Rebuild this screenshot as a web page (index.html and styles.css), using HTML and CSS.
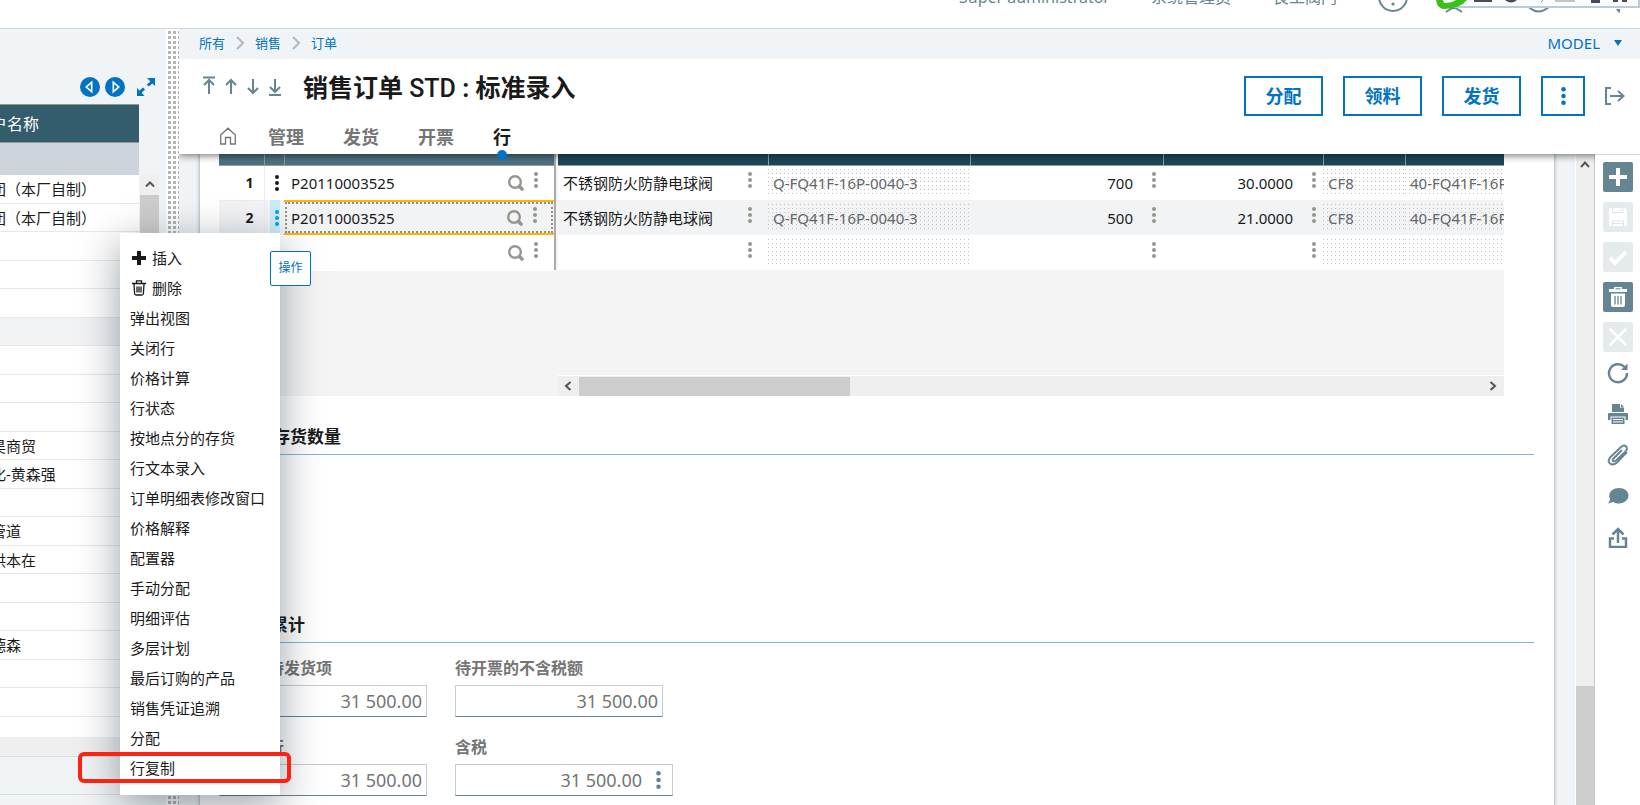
FILE: index.html
```
<!DOCTYPE html>
<html lang="zh-CN">
<head>
<meta charset="utf-8">
<title>销售订单 STD : 标准录入</title>
<link rel="stylesheet" href="styles.css">
</head>
<body>
<svg class="sprite" aria-hidden="true">
  <symbol id="dots" viewBox="0 0 4 16"><circle cx="2" cy="2" r="2"/><circle cx="2" cy="8" r="2"/><circle cx="2" cy="14" r="2"/></symbol>
  <symbol id="search" viewBox="0 0 16 16"><circle cx="7" cy="7" r="5.800" fill="none" stroke="currentColor" stroke-width="2.400"/><path d="M11.500 11.500l2.500 2.500" stroke="currentColor" stroke-width="3.600" stroke-linecap="round"/></symbol>
  <symbol id="chevron" viewBox="0 0 8 14"><path d="M1 1l6 6-6 6" fill="none" stroke="currentColor" stroke-width="2"/></symbol>
</svg>

<header class="topbar">
  <div class="topbar-inner">
    <a class="top-link user" href="#">Super administrator</a>
    <a class="top-link role" href="#">系统管理员</a>
    <a class="top-link company" href="#">良工阀门</a>
    <svg class="help" viewBox="0 0 30 30"><circle cx="15" cy="15" r="14" fill="none" stroke="#668592" stroke-width="2"/><circle cx="15" cy="22" r="1.6" fill="#668592"/></svg>
    <svg class="top-icons" viewBox="0 0 176 12"><path d="M2 11l8-5 8 5M84 5q10 11 22 0" fill="none" stroke="#668592" stroke-width="2"/><path d="M172 8h6l-3 4z" fill="#668592"/></svg>
  </div>
  <div class="ime-bar">
    <svg viewBox="0 0 204 10"><rect x="8" y="-2" width="195" height="9" fill="#fbfcfe" stroke="#bccadb" stroke-width="2"/><path d="M0 0h31Q24 9 7 9Q1 8 0 0z" fill="#3bc11e"/><path d="M7 0h13q-4 3-12 3z" fill="#fff"/><path d="M38 0h18v2H38zM69 0h12q-6 5-12 0zM155 0h9v3h-9zM177 0h5v2h-5zM186 0h5v2h-5z" fill="#4a4a60"/><path d="M105 2l3-3M119 1h20" stroke="#8a8aa0"/></svg>
  </div>
</header>

<div class="workspace">
  <aside class="side">
    <div class="side-tools">
      <button class="icon-btn" aria-label="上一个"><svg width="20" height="20" viewBox="0 0 20 20"><circle cx="10" cy="10" r="10" fill="#0073c2"/><path d="M12.500 3.500v13L5 10z" fill="#fff"/><path d="M10.800 7v6L7.500 10z" fill="#0073c2"/></svg></button>
      <button class="icon-btn" aria-label="下一个"><svg width="20" height="20" viewBox="0 0 20 20"><circle cx="10" cy="10" r="10" fill="#0073c2"/><path d="M7.500 3.500v13L15 10z" fill="#fff"/><path d="M9.200 7v6L12.500 10z" fill="#0073c2"/></svg></button>
      <button class="icon-btn expand" aria-label="展开"><svg width="20" height="20" viewBox="0 0 20 20"><path d="M11 1h8v8l-2.600-2.600-3.600 3-2-2 3.600-3zM1 11l2.500 2.500 3.500-3 2 2-3.300 3.300L8.500 19H1z" fill="#0073c2"/></svg></button>
    </div>
    <div class="customers">
      <div class="customers-view">
        <table class="customers-table">
          <thead><tr><th>户名称</th></tr><tr class="filter"><td></td></tr></thead>
          <tbody>
            <tr><td>团（本厂自制）</td></tr><tr><td>团（本厂自制）</td></tr><tr><td></td></tr><tr><td></td></tr>
            <tr><td></td></tr><tr class="selected"><td></td></tr><tr><td></td></tr><tr><td></td></tr>
            <tr><td></td></tr><tr><td>昊商贸</td></tr><tr><td>化-黄森强</td></tr><tr><td></td></tr>
            <tr><td>管道</td></tr><tr><td>洪本在</td></tr><tr><td></td></tr><tr><td></td></tr>
            <tr><td>德森</td></tr><tr><td></td></tr><tr><td></td></tr><tr class="last"><td></td></tr>
          </tbody>
        </table>
      </div>
      <div class="side-scroll"><svg width="10" height="6" viewBox="0 0 10 6"><path d="M1 5.500l4-4 4 4" fill="none" stroke="#555" stroke-width="2"/></svg><div class="thumb"></div></div>
    </div>
    <div class="side-hscroll"></div>
    <div class="side-footer"></div>
  </aside>
  <div class="splitter"></div>

  <main class="main">
    <nav class="crumbs">
      <a href="#">所有</a><svg class="crumb-sep"><use href="#chevron"/></svg>
      <a href="#">销售</a><svg class="crumb-sep"><use href="#chevron"/></svg>
      <a href="#">订单</a>
      <a class="model" href="#">MODEL<svg width="8" height="6" viewBox="0 0 8 6"><path d="M0 0h8L4 6z" fill="#0073c2"/></svg></a>
    </nav>

    <header class="page-head">
      <div class="title-row">
        <div class="record-nav">
          <button class="icon-btn" aria-label="第一条"><svg width="14" height="20" viewBox="0 0 14 20"><path d="M1 1.500h12M7 18V4M2 9l5-5 5 5" /></svg></button>
          <button class="icon-btn" aria-label="前一条"><svg width="14" height="20" viewBox="0 0 14 20"><path d="M7 18V4M2 9l5-5 5 5"/></svg></button>
          <button class="icon-btn" aria-label="后一条"><svg width="14" height="20" viewBox="0 0 14 20"><path d="M7 3v14M2 12l5 5 5-5"/></svg></button>
          <button class="icon-btn" aria-label="最后一条"><svg width="14" height="20" viewBox="0 0 14 20"><path d="M7 3v13M2 11l5 5 5-5M1 19h12"/></svg></button>
        </div>
        <h1>销售订单 <span>STD</span> : 标准录入</h1>
        <div class="actions">
          <button class="action">分配</button>
          <button class="action">领料</button>
          <button class="action">发货</button>
          <button class="action more" aria-label="更多"><svg class="more-dots"><use href="#dots"/></svg></button>
          <button class="icon-btn exit" aria-label="退出"><svg width="20" height="20" viewBox="0 0 20 20"><path d="M6 2H1v16h5M5 10h13M13 5l5.500 5-5.500 5"/></svg></button>
        </div>
      </div>
      <nav class="tabs">
        <a href="#" aria-label="主页"><svg width="16" height="18" viewBox="0 0 16 18"><path d="M.700 8L8 1.200 15.300 8v9H10.500v-6.500h-5V17H.700z" fill="none" stroke="#757575" stroke-width="1.300"/></svg></a>
        <a href="#">管理</a>
        <a href="#">发货</a>
        <a href="#">开票</a>
        <a class="active" href="#">行</a>
      </nav>
    </header>

    <div class="stage">
      <div class="content">
        <div class="sheet">
          <div class="grid">
            <table class="frozen">
              <colgroup><col class="c-num"><col class="c-menu"><col></colgroup>
              <thead><tr><th></th><th></th><th></th></tr></thead>
              <tbody>
                <tr><th>1</th><td class="menu-cell"><svg class="dots"><use href="#dots"/></svg></td><td><div class="cell"><span class="value">P20110003525</span><svg class="lens"><use href="#search"/></svg><svg class="dots"><use href="#dots"/></svg></div></td></tr>
                <tr class="alt"><th>2</th><td class="menu-cell on"><svg class="dots"><use href="#dots"/></svg></td><td class="editing"><div class="cell"><input class="value" aria-label="产品" value="P20110003525"><svg class="lens"><use href="#search"/></svg><svg class="dots"><use href="#dots"/></svg></div></td></tr>
                <tr><th></th><td class="menu-cell"></td><td><div class="cell"><span class="value"></span><svg class="lens"><use href="#search"/></svg><svg class="dots"><use href="#dots"/></svg></div></td></tr>
              </tbody>
            </table>
            <div class="scroll-part">
              <table class="lines">
                <colgroup><col class="c-name"><col class="c-model"><col class="c-qty"><col class="c-price"><col class="c-mat"><col></colgroup>
                <thead><tr><th></th><th></th><th></th><th></th><th></th><th></th></tr></thead>
                <tbody>
                  <tr><td><div class="cell"><span class="value">不锈钢防火防静电球阀</span><svg class="dots"><use href="#dots"/></svg></div></td><td class="ro"><div>Q-FQ41F-16P-0040-3</div></td><td><div class="cell num"><span class="value">700</span><svg class="dots"><use href="#dots"/></svg></div></td><td><div class="cell num"><span class="value">30.0000</span><svg class="dots"><use href="#dots"/></svg></div></td><td class="ro"><div>CF8</div></td><td class="ro"><div>40-FQ41F-16P</div></td></tr>
                  <tr class="alt"><td><div class="cell"><span class="value">不锈钢防火防静电球阀</span><svg class="dots"><use href="#dots"/></svg></div></td><td class="ro"><div>Q-FQ41F-16P-0040-3</div></td><td><div class="cell num"><span class="value">500</span><svg class="dots"><use href="#dots"/></svg></div></td><td><div class="cell num"><span class="value">21.0000</span><svg class="dots"><use href="#dots"/></svg></div></td><td class="ro"><div>CF8</div></td><td class="ro"><div>40-FQ41F-16P</div></td></tr>
                  <tr><td><div class="cell"><span class="value"></span><svg class="dots"><use href="#dots"/></svg></div></td><td class="ro"><div></div></td><td><div class="cell num"><span class="value"></span><svg class="dots"><use href="#dots"/></svg></div></td><td><div class="cell num"><span class="value"></span><svg class="dots"><use href="#dots"/></svg></div></td><td class="ro"><div></div></td><td class="ro"><div></div></td></tr>
                </tbody>
              </table>
              <div class="hscroll">
                <svg width="8" height="10" viewBox="0 0 8 10"><path d="M6.500 1L2 5l4.500 4" /></svg>
                <div class="track"><div class="thumb"></div></div>
                <svg width="8" height="10" viewBox="0 0 8 10"><path d="M1.500 1L6 5 1.500 9" /></svg>
              </div>
            </div>
          </div>

          <section class="block stock">
            <h2>存货数量</h2>
          </section>
          <section class="block totals">
            <h2>累计</h2>
            <div class="fields">
              <div class="field"><label class="under" for="f1">待发货项</label><input id="f1" value="31 500.00" readonly></div>
              <div class="field"><label for="f2">待开票的不含税额</label><input id="f2" value="31 500.00" readonly></div>
              <div class="field"><label class="under" for="f3">行</label><input id="f3" value="31 500.00" readonly></div>
              <div class="field wide"><label for="f4">含税</label><div class="with-menu"><input id="f4" value="31 500.00" readonly><svg class="field-dots"><use href="#dots"/></svg></div></div>
            </div>
          </section>
        </div>
      </div>
      <div class="vscroll"><svg width="10" height="7" viewBox="0 0 10 7"><path d="M1 6l4-4.500L9 6" fill="none" stroke="#555" stroke-width="2"/></svg><div class="thumb"></div></div>
      <div class="toolbar">
        <button class="tool" aria-label="新建"><svg viewBox="0 0 30 30"><path d="M15 6v18M6 15h18" stroke="#fff" stroke-width="4"/></svg></button>
        <button class="tool" disabled aria-label="保存"><svg viewBox="0 0 30 30"><path d="M6 6h16l2 2v16H6z" fill="#fff"/><path d="M9.500 6v4.500h10.500V6M9.500 24v-5h11v5M9.500 21.500h11M17.500 7v2" fill="none" stroke="#dde5e8"/></svg></button>
        <button class="tool" disabled aria-label="确认"><svg viewBox="0 0 30 30"><path d="M7 16l5 5L23 10" fill="none" stroke="#fff" stroke-width="4"/></svg></button>
        <button class="tool" aria-label="删除"><svg viewBox="0 0 30 30"><path d="M6 7h5V5h8v2h5v3H6zM8 11.500h14V23q0 2-2 2H10q-2 0-2-2z" fill="#fff"/><path d="M12.500 6.800h5" stroke="#668592"/><path d="M12 14v8.500M15 14v8.500M18 14v8.500" stroke="#668592" stroke-width="1.300"/></svg></button>
        <button class="tool" disabled aria-label="取消"><svg viewBox="0 0 30 30"><path d="M7.500 7.500l15 15m0-15l-15 15" stroke="#fff" stroke-width="2.600" stroke-linecap="round"/></svg></button>
        <button class="icon-btn plain" aria-label="刷新"><svg viewBox="0 0 22 22"><path d="M17.500 5A9 9 0 1 0 20 11" fill="none" stroke="#668592" stroke-width="2.400"/><path d="M20.500 1.500v6.500h-6.500z" fill="#668592"/></svg></button>
        <button class="icon-btn plain" aria-label="打印"><svg viewBox="0 0 22 22"><path d="M5 1h8v3.500h4V9H5zM14 1l3 3h-3zM1 11q0-1 1-1h18q1 0 1 1v6h-2.500v-3.500h-15V17H1zM4.500 14.500h13V21h-13z" fill="#668592"/><path d="M6 16.500h10M6 18.900h10" stroke="#fff"/></svg></button>
        <button class="icon-btn plain" aria-label="附件"><svg viewBox="0 0 22 22"><path d="M20 8l-10 10.500q-4 3.500-7 1t.500-6.500L14 3q3-2.500 5-.500t-.500 5L9 16.500q-2 1.500-3 .500t.500-2.500L15 6" fill="none" stroke="#668592" stroke-width="1.900"/></svg></button>
        <button class="icon-btn plain" aria-label="评论"><svg viewBox="0 0 22 22"><path d="M12 3c5.500 0 9.500 3.500 9.500 7.500S17.500 18.500 12 18.500c-2 0-4-.500-5.500-1.500L1 18.500q2-2 2-4.500-.700-1.500-.700-3.500C2.300 6.500 6.500 3 12 3z" fill="#668592"/></svg></button>
        <button class="icon-btn plain" aria-label="共享"><svg viewBox="0 0 22 22"><path d="M7 12.500H3V21h16v-8.500h-4M11 17V3M5.500 8.500L11 3l5.500 5.500" fill="none" stroke="#668592" stroke-width="2.500"/></svg></button>
      </div>
    </div>
  </main>
</div>

<div class="context" role="menu">
  <button role="menuitem"><svg width="14" height="14" viewBox="0 0 14 14"><path d="M7 0v14M0 7h14" stroke="#1a1a1a" stroke-width="4"/></svg>插入</button>
  <button role="menuitem"><svg width="14" height="16" viewBox="0 0 14 16"><path d="M0 3.500h14M2 4l.600 9.500q.200 1.500 1.700 1.500h5.400q1.500 0 1.700-1.500L12 4M4.500 3V.800h5V3M5 6.500V12.500M7 6.500V12.500M9 6.500V12.500" fill="none" stroke="#1a1a1a" stroke-width="1.300"/></svg>删除</button>
  <button role="menuitem">弹出视图</button>
  <button role="menuitem">关闭行</button>
  <button role="menuitem">价格计算</button>
  <button role="menuitem">行状态</button>
  <button role="menuitem">按地点分的存货</button>
  <button role="menuitem">行文本录入</button>
  <button role="menuitem">订单明细表修改窗口</button>
  <button role="menuitem">价格解释</button>
  <button role="menuitem">配置器</button>
  <button role="menuitem">手动分配</button>
  <button role="menuitem">明细评估</button>
  <button role="menuitem">多层计划</button>
  <button role="menuitem">最后订购的产品</button>
  <button role="menuitem">销售凭证追溯</button>
  <button role="menuitem">分配</button>
  <button role="menuitem">行复制</button>
</div>
<div class="tip" role="tooltip">操作</div>
<div class="marker"></div>
</body>
</html>
```
FILE: styles.css
```
* { box-sizing: border-box; }
body {
  margin: 0;
  height: 100vh;
  display: flex;
  flex-direction: column;
  position: relative;
  overflow: hidden;
  background: #fff;
  color: #1a1a1a;
  font: 15px/20px "Noto Sans", "Noto Sans CJK SC", sans-serif;
}
svg { display: block; flex: none; fill: currentColor; }
a { color: #0073c2; text-decoration: none; }
button { font: inherit; color: inherit; border: 0; padding: 0; background: none; }
table { border-collapse: collapse; table-layout: fixed; }
th, td { padding: 0; }
.sprite { display: none; }
.icon-btn { display: flex; align-items: center; justify-content: center; }

/* top bar */
.topbar {
  flex: none;
  height: 29px;
  position: relative;
  display: flex;
  justify-content: flex-end;
  align-items: flex-end;
  overflow: hidden;
  border-bottom: 1px solid #ccd6db;
}
.topbar-inner { display: flex; align-items: center; height: 62px; padding-right: 20px; font-size: 16px; }
.top-link { color: #668592; }
.role { margin-left: 41px; }
.company { margin-left: 42px; }
.help { width: 30px; height: 30px; margin-left: 41px; }
.top-icons { width: 176px; height: 12px; margin: 20px 0 0 36px; }
.ime-bar { position: absolute; right: 0; top: 0; width: 204px; height: 10px; }

/* left pane */
.workspace { flex: 1; display: flex; min-height: 0; }
.side { width: 166px; flex: none; display: flex; flex-direction: column; background: #f0f4f6; }
.side-tools { height: 75px; flex: none; display: flex; justify-content: flex-end; gap: 5px; padding: 48px 10px 0 0; align-items: flex-start; }
.expand { margin-left: 6px; }
.customers { display: flex; flex: none; }
.customers-view { width: 139px; overflow: hidden; }
.customers-table { width: 148px; margin-left: -9px; background: #fff; }
.customers-table th { height: 38px; text-align: left; font-weight: 400; font-size: 16px; color: #fff; background: #335c6d; border-top: 1px solid #8f9a92; border-bottom: 1px solid #8f9a92; }
.customers-table .filter td { height: 32px; background: #cdd4dc; }
.customers-table tbody td { height: 29px; border-bottom: 1px solid #e6e8ea; white-space: nowrap; }
.customers-table tbody tr:nth-child(even) td { height: 28px; }
.customers-table tbody tr.last td { height: 20px; border: 0; }
.customers-table .selected td { background: #f1f3f5; }
.side-scroll { width: 19px; margin: 70px 0 0 1px; padding-top: 7px; background: #efefef; display: flex; flex-direction: column; align-items: center; gap: 8px; }
.side-scroll .thumb { width: 100%; height: 260px; background: #cdcdcd; }
.side-hscroll { flex: none; height: 20px; background: #efefef; border-bottom: 1px solid #d8dde0; }
.side-footer { flex: none; height: 38px; border-bottom: 1px solid #d8dde0; }
.splitter {
  width: 13px;
  flex: none;
  border-left: 2px solid #fff;
  background-image: linear-gradient(#fff 2px, transparent 2px), linear-gradient(90deg, #b4b4b4 3px, #fff 3px);
  background-size: 5px 5px;
}

/* page header */
.main { flex: 1; min-width: 0; display: flex; flex-direction: column; }
.crumbs { flex: none; height: 30px; display: flex; align-items: center; gap: 11px; padding: 0 18px 2px 20px; background: #f0f4f6; font-size: 13px; }
.crumb-sep { width: 8px; height: 14px; color: #b3b9bc; }
.model { margin-left: auto; display: flex; align-items: center; gap: 14px; font-size: 15px; }
.page-head { flex: none; height: 95px; position: relative; z-index: 1; background: #fff; box-shadow: 0 1px 8px rgba(0, 0, 0, .6); clip-path: inset(0 0 -12px 0); display: flex; flex-direction: column; justify-content: space-between; }
.title-row { display: flex; align-items: flex-start; padding: 17px 15px 0 23px; }
.record-nav { display: flex; gap: 8px; }
.record-nav svg, .exit svg { fill: none; stroke: #668592; stroke-width: 2; }
h1 { margin: 0 0 0 21px; font: 700 25px/26px Roboto, "Noto Sans CJK SC", sans-serif; white-space: nowrap; }
h1 span { font-weight: 500; }
.actions { margin-left: auto; display: flex; align-items: center; gap: 20px; }
.action { width: 79px; height: 40px; border: 2px solid #0073c2; color: #0073c2; background: #fff; font-size: 18px; font-weight: 700; }
.more { width: 44px; display: flex; align-items: center; justify-content: center; }
.more-dots { width: 5px; height: 18px; }
.tabs { display: flex; gap: 39px; height: 27px; padding-left: 41px; font-size: 18px; font-weight: 700; }
.tabs a { color: #757575; position: relative; }
.tabs a:first-child { margin-right: -7px; }
.tabs .active { color: #1a1a1a; }
.tabs .active::after { content: ""; position: absolute; left: 4px; bottom: -6px; width: 10px; height: 10px; border-radius: 50%; background: #0073c2; }

/* scrolling stage */
.stage { flex: 1; min-height: 0; display: flex; }
.content { flex: 1; min-width: 0; padding: 0 20px; overflow: hidden; background: #f0f4f6; }
.sheet { min-height: 100%; padding: 0 20px 0 19px; background: #fff; border: solid #c8cccf; border-width: 0 1px; box-shadow: 0 0 3px rgba(0, 0, 0, .25); }
.vscroll { width: 20px; flex: none; display: flex; flex-direction: column; align-items: center; padding-top: 7px; background: #efefef; border-left: 1px solid #fff; border-right: 1px solid #c8c8c8; }
.vscroll .thumb { width: 100%; flex: 1; margin-top: 518px; background: #cdcdcd; }
.toolbar { width: 45px; flex: none; display: flex; flex-direction: column; align-items: center; gap: 10px; padding-top: 7px; background: #fff; border-top: 1px solid #d9dcde; position: relative; z-index: 2; }
.tool { width: 30px; height: 30px; border-radius: 2px; background: #668592; }
.tool:disabled { background: #e5eaec; }
.plain { width: 22px; height: 22px; }
.plain + .plain { margin-top: 9px; }
.plain svg { width: 22px; height: 22px; }

/* line grid */
.grid { display: flex; align-items: flex-start; margin-right: 30px; height: 242px; background: #f4f4f4; }
.grid thead th { height: 11px; border-bottom: 1px solid #9a9d92; background: #1b485c; }
.grid thead th + th { border-left: 1px solid #9a9d92; }
.frozen thead th { background: #4d7080; }
.frozen { width: 337px; flex: none; background: #fff; border-right: 2px solid #aaa; }
.c-num { width: 45px; }
.c-menu { width: 20px; }
.grid tbody tr { height: 35px; }
.grid tbody .alt { background: #f1f3f5; }
.frozen tbody th { text-align: right; padding-right: 10px; font-size: 14px; border-bottom: 1px solid #ebeced; border-right: 1px solid #ebeced; }
.dots { width: 4px; height: 16px; color: #96968e; margin-bottom: 5px; }
.lens { width: 16px; height: 16px; color: #96968e; }
.cell { display: flex; align-items: center; gap: 10px; padding: 0 16px 0 7px; }
.cell .value { flex: 1; min-width: 0; white-space: nowrap; }
.lines .cell { gap: 18px; padding: 0 16px 0 5px; }
.num .value { text-align: right; }
.lines .num { padding-right: 7px; gap: 19px; }
.menu-cell .dots { margin: 0 0 0 10px; color: #1a1a1a; }
.menu-cell.on { background: linear-gradient(90deg, transparent 5px, #c9ecf7 5px) 0 0 / 15px 100% no-repeat; }
.menu-cell.on .dots { color: #00a3e0; }
.editing .cell { position: relative; height: 35px; border: solid #ffb500; border-width: 2px 0; padding: 0; gap: 0; }
.editing .cell::after { content: ""; position: absolute; inset: 0 1px; border: 2px dotted #8f8f88; pointer-events: none; }
.editing .value { height: 28px; padding: 0 0 0 7px; border: 0; outline: 0; background: none; font: inherit; color: inherit; }
.editing .lens { margin-right: 10px; }
.editing .dots { margin-right: 17px; }
.scroll-part { flex: 1; min-width: 0; height: 100%; margin-left: 2px; display: flex; flex-direction: column; justify-content: space-between; overflow: hidden; }
.lines { width: 100%; background: #fff; }
.c-name { width: 210px; }
.c-model { width: 202px; }
.c-qty { width: 193px; }
.c-price { width: 160px; }
.c-mat { width: 82px; }
.ro div {
  height: 28px;
  padding-left: 5px;
  line-height: 28px;
  color: #646667;
  white-space: nowrap;
  overflow: hidden;
  background-image: conic-gradient(from 270deg at 1px 1px, #c0c2c3 90deg, transparent 0);
  background-size: 4px 4px;
}
.hscroll { height: 21px; display: flex; align-items: center; gap: 7px; padding: 0 7px 0 6px; background: #efefef; border-top: 1px solid #fff; }
.hscroll svg { fill: none; stroke: #555; stroke-width: 2; }
.track { flex: 1; }
.hscroll .thumb { width: 30%; height: 19px; background: #cdcdcd; }

/* totals */
.block h2 { margin: 0; height: 34px; padding-left: 54px; border-bottom: 1px solid #7db9e0; font-size: 17px; line-height: 32px; }
.stock { padding-top: 25px; height: 213px; }
.totals h2 { padding-left: 52px; }
.fields { display: grid; grid-template-columns: 208px 218px; gap: 17px 28px; padding-top: 12px; }
.field { display: flex; flex-direction: column; gap: 4px; }
label { height: 26px; line-height: 26px; font-size: 16px; font-weight: 700; color: #757575; }
.under { padding-left: 49px; }
.field input { width: 208px; height: 32px; padding: 0 4px; border: 1px solid #c3cdd2; border-bottom-color: #668592; background: #fff; text-align: right; font: 18px/30px "Noto Sans", sans-serif; color: #757575; }
.with-menu { display: flex; align-items: center; height: 32px; border: 1px solid #c3cdd2; border-bottom-color: #668592; padding-right: 11px; }
.with-menu input { flex: 1; min-width: 0; height: 30px; border: 0; padding-right: 14px; }
.field-dots { width: 5px; height: 18px; color: #668592; }

/* overlays */
.context { position: absolute; z-index: 3; left: 120px; top: 233px; width: 160px; padding: 10px 0 12px; background: #fff; box-shadow: 0 10px 40px rgba(0, 20, 29, .4); }
.context button { display: flex; align-items: center; gap: 6px; width: 100%; height: 30px; padding-left: 10px; text-align: left; white-space: nowrap; }
.context button svg { margin-left: 2px; }
.tip { position: absolute; z-index: 4; left: 270px; top: 251px; width: 41px; height: 35px; border: 1px solid #0073c2; border-radius: 2px; background: #fff; color: #0073c2; font-size: 12px; line-height: 32px; text-align: center; }
.marker { position: absolute; z-index: 5; left: 78px; top: 752px; width: 213px; height: 31px; border: 4px solid #fb2414; border-radius: 6px; }
```
